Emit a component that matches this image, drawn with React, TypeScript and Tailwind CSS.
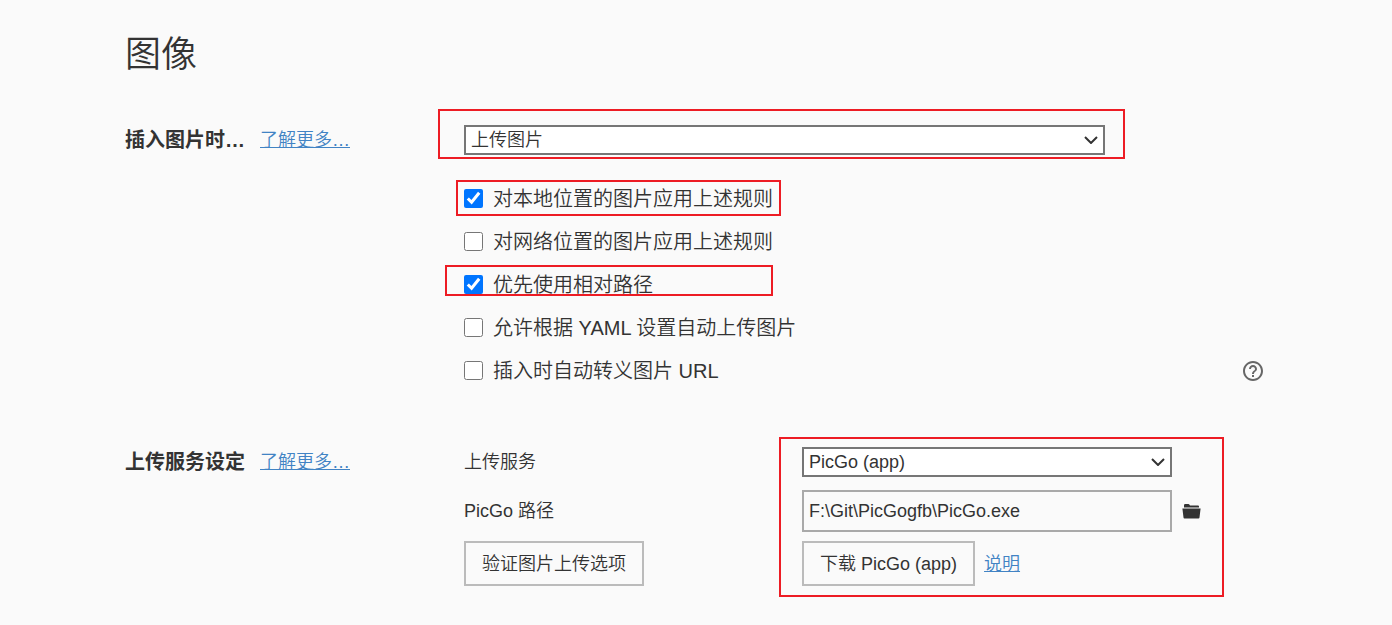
import { useState } from "react";
import type { ReactNode } from "react";

type Option = { id: string; label: string; checked: boolean; mark?: string };

const options: Option[] = [
  { id: "local", label: "对本地位置的图片应用上述规则", checked: true, mark: "-left-2 top-[3px] h-9 w-[325px]" },
  { id: "network", label: "对网络位置的图片应用上述规则", checked: false },
  { id: "relative", label: "优先使用相对路径", checked: true, mark: "-left-[19px] top-0.5 h-[31px] w-[328px]" },
  { id: "yaml", label: "允许根据 YAML 设置自动上传图片", checked: false },
  { id: "escape", label: "插入时自动转义图片 URL", checked: false },
];

function Mark({ className }: { className: string }) {
  return (
    <div aria-hidden="true" className={`pointer-events-none absolute border-2 border-[#ed1c24] ${className}`} />
  );
}

function SelectBox({ id, label, value }: { id: string; label?: string; value: string }) {
  return (
    <div className="relative">
      <select
        id={id}
        aria-label={label}
        className="block h-[30px] w-full appearance-none border-2 border-[#767676] bg-white pr-8 pl-[5px] text-lg leading-6 font-[350] text-[#333]"
      >
        <option>{value}</option>
      </select>
      <svg
        aria-hidden="true"
        viewBox="0 0 14 8"
        className="pointer-events-none absolute top-[11px] right-[7px] h-2 w-3.5"
        fill="none"
        stroke="#333"
        strokeWidth="2"
      >
        <path d="M1 1 L7 7 L13 1" />
      </svg>
    </div>
  );
}

function SectionTitle({ children }: { children: ReactNode }) {
  return (
    <div className="flex h-[30px] w-[339px] shrink-0 items-center gap-[15px]">
      <h2 className="text-xl font-bold whitespace-nowrap">{children}</h2>
      <a href="#more" className="text-lg whitespace-nowrap text-[#4183c4] underline">
        了解更多…
      </a>
    </div>
  );
}

export default function App() {
  const [path, setPath] = useState("F:\\Git\\PicGogfb\\PicGo.exe");

  return (
    <div className="min-h-screen bg-[#fafafa] pt-[35px] pr-[129px] pb-9 pl-[125px] font-['Liberation_Sans','Noto_Sans_CJK_SC',sans-serif] font-[350] text-[#333]">
      <h1 className="text-4xl leading-10">图像</h1>

      <section className="mt-[50px] flex">
        <SectionTitle>插入图片时…</SectionTitle>
        <div className="min-w-0 flex-1">
          <div className="relative mr-[158px]">
            <SelectBox id="insert-action" label="插入图片时" value="上传图片" />
            <Mark className="-top-4 -right-5 -bottom-1 -left-[26px]" />
          </div>
          <ul className="mt-[22px]">
            {options.map((option) => (
              <li key={option.id} className="relative flex h-[43px] items-center">
                <input
                  id={option.id}
                  type="checkbox"
                  defaultChecked={option.checked}
                  className="size-[19px] shrink-0 accent-[#0075ff]"
                />
                <label htmlFor={option.id} className="pl-2.5 text-xl">
                  {option.label}
                </label>
                {option.id === "escape" && (
                  <button type="button" aria-label="帮助" className="ml-auto">
                    <svg viewBox="2 2 20 20" className="size-5" fill="#666">
                      <path d="M11 18h2v-2h-2v2zm1-16C6.48 2 2 6.48 2 12s4.48 10 10 10 10-4.48 10-10S17.52 2 12 2zm0 18c-4.41 0-8-3.59-8-8s3.59-8 8-8 8 3.59 8 8-3.59 8-8 8zm0-14c-2.21 0-4 1.79-4 4h2c0-1.1.9-2 2-2s2 .9 2 2c0 2-3 1.75-3 5h2c0-2.25 3-2.5 3-5 0-2.21-1.79-4-4-4z" />
                    </svg>
                  </button>
                )}
                {option.mark && <Mark className={option.mark} />}
              </li>
            ))}
          </ul>
        </div>
      </section>

      <section className="mt-[55px] flex">
        <SectionTitle>上传服务设定</SectionTitle>
        <div className="flex min-w-0 flex-1 text-lg">
          <div className="flex w-[338px] shrink-0 flex-col items-start">
            <label htmlFor="service" className="flex h-[30px] items-center">
              上传服务
            </label>
            <label htmlFor="picgo-path" className="mt-[13px] flex h-[42px] items-center">
              PicGo 路径
            </label>
            <button type="button" className="mt-[9px] h-[45px] border-2 border-[#bbb] px-4 whitespace-nowrap">
              验证图片上传选项
            </button>
          </div>
          <div className="relative mr-[62px] min-w-0 flex-1">
            <div className="mr-[29px]">
              <SelectBox id="service" value="PicGo (app)" />
            </div>
            <div className="mt-[13px] flex items-center gap-2.5">
              <input
                id="picgo-path"
                type="text"
                value={path}
                onChange={(event) => setPath(event.target.value)}
                className="h-[42px] min-w-0 flex-1 border-2 border-[#a9a9a9] bg-transparent px-[5px]"
              />
              <button type="button" aria-label="选择文件" className="shrink-0">
                <svg viewBox="0 0 19 16" className="h-4 w-[19px]" fill="#333">
                  <path d="M2 4.6V2.2Q2 1 3.2 1H6.3Q7.2 1 7.7 2L8 2.5H16Q17 2.5 17 3.5V4.6Z" />
                  <path d="M0.4 5.6H18.6L17.5 14.6Q17.4 15.5 16.5 15.5H2.5Q1.6 15.5 1.5 14.6Z" />
                </svg>
              </button>
            </div>
            <div className="mt-[9px] flex items-center gap-[9px]">
              <button type="button" className="h-[45px] border-2 border-[#bbb] px-4 whitespace-nowrap">
                下载 PicGo (app)
              </button>
              <a href="#help" className="text-[#4183c4] underline">
                说明
              </a>
            </div>
            <Mark className="-top-2.5 -right-[23px] -bottom-[11px] -left-[23px]" />
          </div>
        </div>
      </section>
    </div>
  );
}
